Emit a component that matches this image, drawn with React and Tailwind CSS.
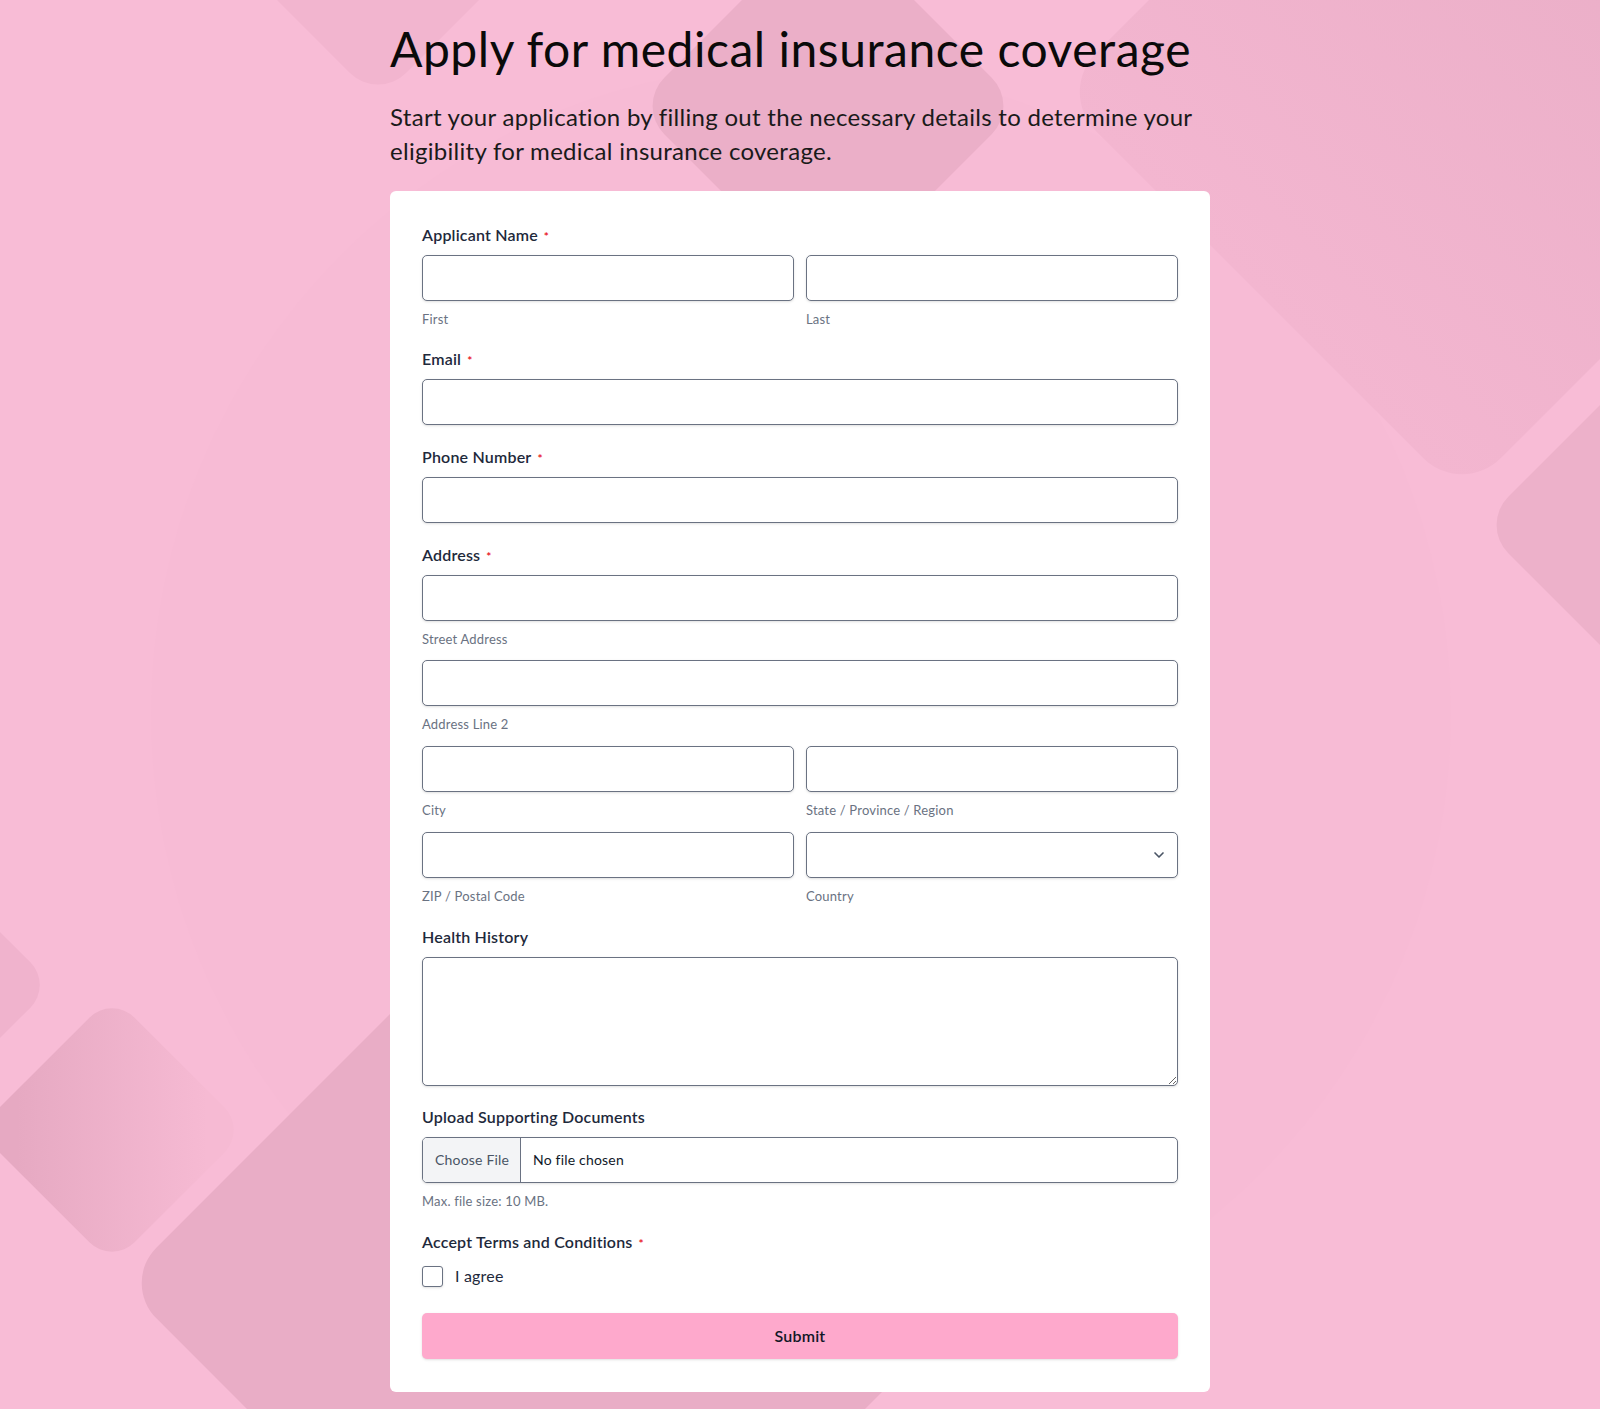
import { ChevronDown } from 'lucide-react'

const Backdrop = () => {
  // rotated rounded squares, [cx, cy, half diagonal, radius, fill]
  const shapes = [
    [378, -84, 185, 40, '#f2b5cf'],
    [828, 106, 192, 40, '#ebafc8'],
    [1462, 92, 405, 55, 'url(#tr)'],
    [1705, 525, 225, 40, '#edb1ca'],
    [-72, 985, 125, 32, '#f0b3cd'],
    [112, 1130, 135, 32, 'url(#bl)'],
    [556, 1283, 435, 50, '#e9adc6'],
  ]
  return (
    <svg className="absolute inset-0 h-full w-full" viewBox="0 0 1600 1409" preserveAspectRatio="none">
      <defs>
        <linearGradient id="tr" x1="0" y1="0" x2="0" y2="1">
          <stop offset="0" stopColor="#eaaec7" />
          <stop offset="1" stopColor="#f3b6d0" />
        </linearGradient>
        <linearGradient id="bl" x1="0" y1="0" x2="1" y2="0" gradientTransform="rotate(-45 0.5 0.5)">
          <stop offset="0" stopColor="#e6a9c2" />
          <stop offset="1" stopColor="#f6bad3" />
        </linearGradient>
      </defs>
      <circle cx="801" cy="714" r="650" fill="#f7bbd5" />
      {shapes.map(([cx, cy, h, r, fill], i) => {
        const s = h * Math.SQRT2
        return (
          <rect
            key={i}
            x={cx - s / 2}
            y={cy - s / 2}
            width={s}
            height={s}
            rx={r}
            fill={fill}
            transform={`rotate(45 ${cx} ${cy})`}
          />
        )
      })}
    </svg>
  )
}

const Label = ({ children, required }) => (
  <div className="mb-2 flex h-6 items-center text-base font-semibold text-[#1e293b]">
    {children}
    {required && <span className="mt-1 ml-1.5 text-xs leading-none text-red-600">*</span>}
  </div>
)

const Sub = ({ children }) => <p className="mt-2 text-[13px] leading-5 text-gray-500">{children}</p>

const inputCls = 'h-[46px] w-full rounded-[5px] border border-gray-500 bg-white px-3 text-base text-gray-900 shadow-sm outline-none'

const App = () => {
  return (
    <div className="relative min-h-[1409px] overflow-hidden bg-[#f8bcd6] font-[Lato,sans-serif] tracking-[0.012em]">
      <Backdrop />
      <div className="relative mx-auto w-[820px] pt-5">
        <h1 className="text-[48px] leading-[58px] tracking-[0.011em] text-[#0a0a0a]">Apply for medical insurance coverage</h1>
        <p className="mt-[22px] text-2xl leading-[34px] tracking-[0.012em] text-[#1a1a1a]">
          Start your application by filling out the necessary details to determine your eligibility for medical insurance coverage.
        </p>

        <form className="mt-[23px] rounded-md bg-white px-8 pt-8 pb-[33px]" onSubmit={(e) => e.preventDefault()}>
          {/* Applicant name */}
          <div>
            <Label required>Applicant Name</Label>
            <div className="grid grid-cols-2 gap-3">
              <div>
                <input className={inputCls} />
                <Sub>First</Sub>
              </div>
              <div>
                <input className={inputCls} />
                <Sub>Last</Sub>
              </div>
            </div>
          </div>

          <div className="mt-[18px]">
            <Label required>Email</Label>
            <input type="email" className={inputCls} />
          </div>

          <div className="mt-5">
            <Label required>Phone Number</Label>
            <input type="tel" className={inputCls} />
          </div>

          {/* Address */}
          <div className="mt-5">
            <Label required>Address</Label>
            <input className={inputCls} />
            <Sub>Street Address</Sub>
            <input className={`${inputCls} mt-[11px]`} />
            <Sub>Address Line 2</Sub>
            <div className="mt-3 grid grid-cols-2 gap-x-3">
              <div>
                <input className={inputCls} />
                <Sub>City</Sub>
              </div>
              <div>
                <input className={inputCls} />
                <Sub>State / Province / Region</Sub>
              </div>
            </div>
            <div className="mt-3 grid grid-cols-2 gap-x-3">
              <div>
                <input className={inputCls} />
                <Sub>ZIP / Postal Code</Sub>
              </div>
              <div>
                <div className="relative">
                  <select className={`${inputCls} appearance-none`} defaultValue="">
                    <option value=""></option>
                  </select>
                  <ChevronDown className="pointer-events-none absolute top-1/2 right-[11px] h-4 w-4 -translate-y-1/2 text-gray-600" strokeWidth={2.5} />
                </div>
                <Sub>Country</Sub>
              </div>
            </div>
          </div>

          <div className="mt-[19px]">
            <Label>Health History</Label>
            <textarea className="block h-[129px] w-full rounded-[5px] border border-gray-500 bg-white px-3 py-2 text-base shadow-sm outline-none" />
          </div>

          <div className="mt-[19px]">
            <Label>Upload Supporting Documents</Label>
            <label className="flex h-[46px] w-full cursor-pointer items-stretch overflow-hidden rounded-[5px] border border-gray-500 bg-white shadow-sm">
              <span className="flex w-[98px] items-center border-r border-gray-500 bg-gray-100 pl-3 text-sm text-gray-600">Choose File</span>
              <span className="flex items-center pl-3 text-sm text-gray-900">No file chosen</span>
              <input type="file" className="hidden" />
            </label>
            <Sub>Max. file size: 10 MB.</Sub>
          </div>

          <div className="mt-[19px]">
            <Label required>Accept Terms and Conditions</Label>
            <label className="mt-2.5 flex h-6 items-center gap-3">
              <input type="checkbox" className="h-[21px] w-[21px] appearance-none rounded-[3px] border border-gray-500 bg-white shadow-sm" />
              <span className="text-base text-[#1e293b]">I agree</span>
            </label>
          </div>

          <button
            type="submit"
            className="mt-[25px] h-[46px] w-full rounded-[5px] bg-[#fea9cc] text-base font-semibold text-[#111827] shadow-sm"
          >
            Submit
          </button>
        </form>
      </div>
    </div>
  )
}

export default App
